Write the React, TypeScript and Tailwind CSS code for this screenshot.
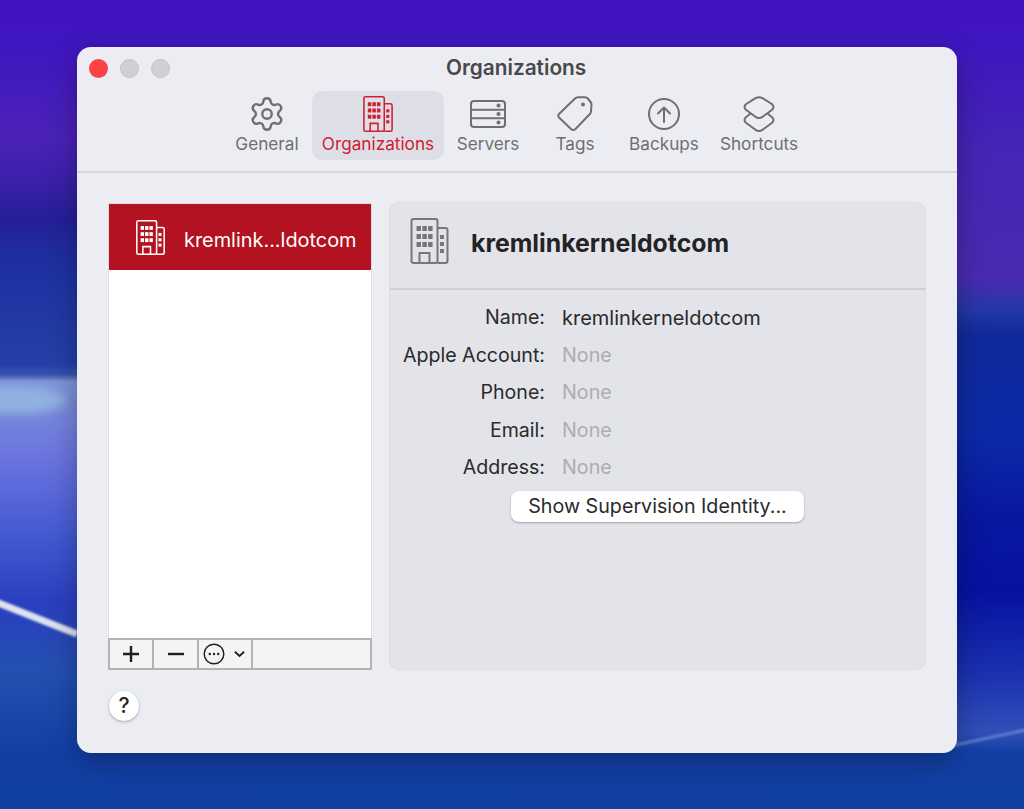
import React from 'react'
import { Settings } from 'lucide-react'

function Wallpaper() {
  return (
    <svg
      className="absolute inset-0 w-full h-full"
      viewBox="0 0 1024 809"
      preserveAspectRatio="none"
    >
      <defs>
        <linearGradient id="leftSide" x1="0" y1="0" x2="0" y2="809" gradientUnits="userSpaceOnUse">
          <stop offset="0" stopColor="#3f14c0" />
          <stop offset="0.058" stopColor="#4016c0" />
          <stop offset="0.17" stopColor="#4a22b8" />
          <stop offset="0.225" stopColor="#3a20a8" />
          <stop offset="0.27" stopColor="#241f98" />
          <stop offset="0.32" stopColor="#1e2fa0" />
          <stop offset="0.45" stopColor="#2440a8" />
          <stop offset="0.463" stopColor="#3a52b0" />
          <stop offset="0.472" stopColor="#7f95d8" />
          <stop offset="0.57" stopColor="#6a72e0" />
          <stop offset="0.67" stopColor="#3f58d0" />
          <stop offset="0.745" stopColor="#2a3fc0" />
          <stop offset="0.83" stopColor="#2350b0" />
          <stop offset="0.93" stopColor="#133fa5" />
          <stop offset="1" stopColor="#123fa2" />
        </linearGradient>
        <linearGradient id="rightSide" x1="0" y1="0" x2="0" y2="809" gradientUnits="userSpaceOnUse">
          <stop offset="0" stopColor="#3f14c0" />
          <stop offset="0.058" stopColor="#4016c0" />
          <stop offset="0.19" stopColor="#4525b5" />
          <stop offset="0.345" stopColor="#4a2ab0" />
          <stop offset="0.382" stopColor="#2438a8" />
          <stop offset="0.414" stopColor="#0f2a9a" />
          <stop offset="0.54" stopColor="#0a2aa8" />
          <stop offset="0.636" stopColor="#0818a0" />
          <stop offset="0.73" stopColor="#0612a0" />
          <stop offset="0.83" stopColor="#1a30b0" />
          <stop offset="0.905" stopColor="#3050b8" />
          <stop offset="0.93" stopColor="#133fa5" />
          <stop offset="1" stopColor="#123fa2" />
        </linearGradient>
        <filter id="soft" x="-50%" y="-200%" width="200%" height="500%">
          <feGaussianBlur stdDeviation="1" />
        </filter>
        <filter id="glow" x="-50%" y="-100%" width="200%" height="300%">
          <feGaussianBlur stdDeviation="4" />
        </filter>
      </defs>
      <rect width="512" height="809" fill="url(#leftSide)" />
      <rect x="512" width="512" height="809" fill="url(#rightSide)" />
      <ellipse cx="15" cy="400" rx="52" ry="14" fill="#90b0e0" filter="url(#glow)" />
      <path d="M-4 602 L77 634" stroke="#dde1f0" strokeWidth="7" filter="url(#soft)" />
      <path d="M950 746 L1030 729" stroke="#5f7ccc" strokeWidth="3" filter="url(#soft)" />
    </svg>
  )
}

function BuildingIcon({ className }: { className: string }) {
  return (
    <svg viewBox="0 0 38 46" className={className} fill="none" stroke="currentColor" strokeWidth="2">
      <rect x="1" y="1" width="26" height="44" rx="2" />
      <path d="M27 10 H35 A2 2 0 0 1 37 12 V43 A2 2 0 0 1 35 45 H27" />
      <path d="M9 45 V35 H19 V45" />
      <g fill="currentColor" stroke="none">
        <rect x="6" y="8" width="4.5" height="5" />
        <rect x="11.8" y="8" width="4.5" height="5" />
        <rect x="17.6" y="8" width="4.5" height="5" />
        <rect x="6" y="16" width="4.5" height="5" />
        <rect x="11.8" y="16" width="4.5" height="5" />
        <rect x="17.6" y="16" width="4.5" height="5" />
        <rect x="6" y="24" width="4.5" height="5" />
        <rect x="11.8" y="24" width="4.5" height="5" />
        <rect x="17.6" y="24" width="4.5" height="5" />
        <rect x="29.5" y="17" width="4" height="4" />
        <rect x="29.5" y="24" width="4" height="4" />
        <rect x="29.5" y="31" width="4" height="4" />
      </g>
    </svg>
  )
}

function ServerIcon() {
  return (
    <svg viewBox="0 0 36 28" className="w-[36px] h-[28px]" fill="none" stroke="currentColor" strokeWidth="2">
      <rect x="1" y="1" width="34" height="26" rx="3" />
      <path d="M1 9.7 H35 M1 18.3 H35" />
      <g fill="currentColor" stroke="none">
        <circle cx="28.5" cy="5.4" r="2" />
        <circle cx="28.5" cy="14" r="2" />
        <circle cx="28.5" cy="22.6" r="2" />
      </g>
    </svg>
  )
}

function TagIcon() {
  return (
    <svg viewBox="0 0 36 36" className="w-[36px] h-[36px]" fill="none" stroke="currentColor" strokeWidth="2" strokeLinejoin="round">
      <path d="M18 2.5 Q19.3 1.2 21 1.2 H28 Q29.6 1.2 30.7 2.5 L33.6 6 Q34.6 7.2 34.5 8.8 L34 15.5 Q33.9 17 32.9 18 L18.5 33 Q16.2 35 14 33 L2 21.5 Q0.5 19.5 2 18 Z" />
      <circle cx="26" cy="8.5" r="2" fill="currentColor" stroke="none" />
    </svg>
  )
}

function BackupIcon() {
  return (
    <svg viewBox="0 0 32 32" className="w-[32px] h-[32px]" fill="none" stroke="currentColor" strokeWidth="2">
      <circle cx="16" cy="16" r="15" />
      <path d="M16 24 V9.5 M10 15.5 L16 9.5 L22 15.5" strokeLinecap="round" strokeLinejoin="round" />
    </svg>
  )
}

function ShortcutIcon() {
  return (
    <svg viewBox="0 0 32 36" className="w-[32px] h-[36px]" fill="none" stroke="currentColor" strokeWidth="2" strokeLinejoin="round">
      <path d="M12.5 2.2 Q16 0.2 19.5 2.2 L28.8 8 Q32.2 11 28.8 14 L19.5 20.8 Q16 23 12.5 20.8 L3.2 14 Q-0.2 11 3.2 8 Z" />
      <path d="M7.5 17.5 L3.2 21 Q-0.2 24 3.2 27 L12.5 33.8 Q16 36 19.5 33.8 L28.8 27 Q32.2 24 28.8 21 L24.5 17.5" />
    </svg>
  )
}

const tabs = [
  { label: 'General', width: 'w-[84px]', icon: <Settings size={38} strokeWidth={1.5} /> },
  { label: 'Organizations', width: 'w-[132px]', icon: <BuildingIcon className="w-[30px] h-[36px]" />, active: true },
  { label: 'Servers', width: 'w-[82px]', icon: <ServerIcon /> },
  { label: 'Tags', width: 'w-[86px]', icon: <TagIcon /> },
  { label: 'Backups', width: 'w-[86px]', icon: <BackupIcon /> },
  { label: 'Shortcuts', width: 'w-[98px]', icon: <ShortcutIcon /> },
]

const details = [
  { label: 'Name:', value: 'kremlinkerneldotcom', filled: true },
  { label: 'Apple Account:', value: 'None' },
  { label: 'Phone:', value: 'None' },
  { label: 'Email:', value: 'None' },
  { label: 'Address:', value: 'None' },
]

export default function App() {
  return (
    <div className="relative w-[1024px] h-[809px] overflow-hidden font-['Inter',sans-serif]">
      <Wallpaper />
      <div className="relative pt-[47px] pl-[77px]">
        <div className="w-[880px] h-[706px] rounded-[14px] bg-[#ecedf3] shadow-[0_8px_30px_rgba(0,0,0,0.3)] flex flex-col">
          {/* titlebar */}
          <div className="relative h-[44px] shrink-0">
            <div className="absolute left-[12px] top-[12px] flex gap-[12px]">
              <span className="w-[19px] h-[19px] rounded-full bg-[#fc4246]" />
              <span className="w-[19px] h-[19px] rounded-full bg-[#ced0d3] border border-[#c2c3c7]" />
              <span className="w-[19px] h-[19px] rounded-full bg-[#ced0d3] border border-[#c2c3c7]" />
            </div>
            <div className="pl-[369px] pt-[9px] text-[20.8px] leading-[24px] font-semibold text-[#48484a]">
              Organizations
            </div>
          </div>
          {/* toolbar */}
          <div className="h-[80px] shrink-0 pl-[148px] flex gap-[3px] border-b-2 border-[#d6d7db] box-content">
            {tabs.map((tab) => (
              <div
                key={tab.label}
                className={
                  tab.active
                    ? `${tab.width} h-[69px] rounded-[10px] bg-[#dedfe6] text-[#cf2031] flex flex-col items-center`
                    : `${tab.width} h-[69px] text-[#6f6f73] flex flex-col items-center`
                }
              >
                <div className="h-[46px] flex items-center justify-center">{tab.icon}</div>
                <div className="text-[17.2px] leading-[20px] mt-[-3px]">{tab.label}</div>
              </div>
            ))}
          </div>
          {/* body */}
          <div className="flex pl-[31px] pt-[29px] gap-[17px]">
            <div className="w-[264px] h-[467px] mt-[1px] bg-white border border-[#dcdde2] flex flex-col">
              <div className="h-[66px] bg-[#b31220] text-white flex items-center pl-[27px] gap-[19px]">
                <BuildingIcon className="w-[29px] h-[35px]" />
                <span className="text-[19.9px] mt-[7px]">kremlink...ldotcom</span>
              </div>
              <div className="flex-1" />
              <div className="h-[32px] border-2 border-[#b3b3b5] bg-[#f4f4f5] mx-[-1px] mb-[-1px] flex items-stretch text-[#1f1f21]">
                <div className="w-[44px] border-r-2 border-[#b3b3b5] flex items-center justify-center">
                  <svg viewBox="0 0 18 18" className="w-[18px] h-[18px]" stroke="currentColor" strokeWidth="2.4">
                    <path d="M9 1 V17 M1 9 H17" />
                  </svg>
                </div>
                <div className="w-[45px] border-r-2 border-[#b3b3b5] flex items-center justify-center">
                  <svg viewBox="0 0 18 18" className="w-[18px] h-[18px]" stroke="currentColor" strokeWidth="2.4">
                    <path d="M1 9 H17" />
                  </svg>
                </div>
                <div className="w-[54px] border-r-2 border-[#b3b3b5] flex items-center pl-[4px] gap-[9px]">
                  <svg viewBox="0 0 22 22" className="w-[22px] h-[22px]" fill="none" stroke="currentColor" strokeWidth="1.4">
                    <circle cx="11" cy="11" r="9.8" />
                    <g fill="currentColor" stroke="none">
                      <circle cx="6.8" cy="11" r="1.2" />
                      <circle cx="11" cy="11" r="1.2" />
                      <circle cx="15.2" cy="11" r="1.2" />
                    </g>
                  </svg>
                  <svg viewBox="0 0 12 8" className="w-[11px] h-[8px]" fill="none" stroke="currentColor" strokeWidth="2">
                    <path d="M1 1.5 L6 6.2 L11 1.5" />
                  </svg>
                </div>
              </div>
            </div>
            <div className="w-[537px] h-[468px] rounded-[10px] bg-[#e3e4e9] border border-[#dcdde2] flex flex-col">
              <div className="h-[76px] pb-[9px] border-b-2 border-[#cfd0d4] flex items-center pl-[20px] gap-[22px] box-content shrink-0">
                <BuildingIcon className="w-[39px] h-[46px] text-[#77777b]" />
                <span className="text-[24.8px] font-bold text-[#232325] mt-[6px]">kremlinkerneldotcom</span>
              </div>
              <div className="pt-[11px] flex flex-col gap-[3.5px]">
                {details.map((row) => (
                  <div key={row.label} className="h-[34px] flex items-center">
                    <div className="w-[155px] text-right text-[19.6px] text-[#2a2a2c] whitespace-nowrap">{row.label}</div>
                    <div className={row.filled ? 'ml-[17px] text-[20px] text-[#2a2a2c]' : 'ml-[17px] text-[19.7px] text-[#acadb1]'}>
                      {row.value}
                    </div>
                  </div>
                ))}
              </div>
              <div className="flex pl-[121px] mt-[6px]">
                <div className="w-[293px] h-[31px] rounded-[8px] bg-white shadow-[0_1px_2px_rgba(0,0,0,0.3)] flex items-center justify-center text-[19.7px] text-[#2a2a2c]">
                  Show Supervision Identity...
                </div>
              </div>
            </div>
          </div>
          <div className="pl-[32px] pt-[21px]">
            <div className="w-[30px] h-[30px] rounded-full bg-white shadow-[0_1px_3px_rgba(0,0,0,0.3)] flex items-center justify-center text-[21px] font-medium text-[#262628]">
              ?
            </div>
          </div>
        </div>
      </div>
    </div>
  )
}
